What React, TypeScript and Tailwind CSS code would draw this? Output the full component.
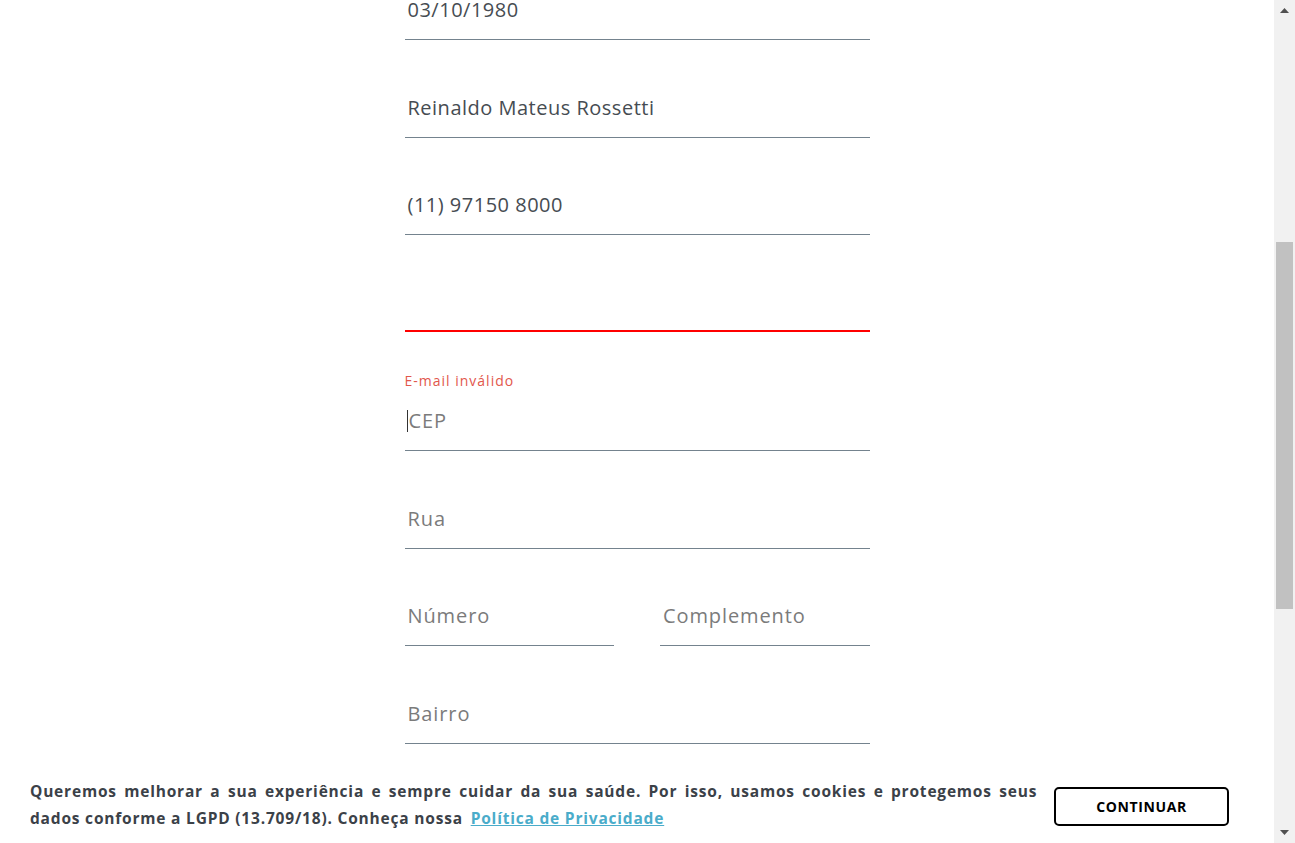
import { useState } from 'react';

const font = { fontFamily: '"Open Sans", "Liberation Sans", sans-serif' };

function Field({
  value,
  placeholder,
  error,
  caret,
}: {
  value?: string;
  placeholder: string;
  error?: boolean;
  caret?: boolean;
}) {
  return (
    <div className="flex flex-col">
      <div
        className={
          error
            ? 'flex h-[58px] items-center pl-[3px] text-[20px]'
            : 'flex h-[59px] items-center pl-[3px] text-[20px]'
        }
      >
        {caret && <span className="mr-[1px] ml-[-1px] h-[22px] w-px bg-[#333]" />}
        {value ? (
          <span className="tracking-[0.5px] text-[#464c52]">{value}</span>
        ) : (
          <span className="tracking-[0.9px] text-[#7b7b7b]">{placeholder}</span>
        )}
      </div>
      {error ? <div className="h-[2px] bg-[#ff0000]" /> : <div className="h-px bg-[#74838e]" />}
    </div>
  );
}

export default function App() {
  const [accepted, setAccepted] = useState(false);

  return (
    <div className="flex h-[843px] w-full overflow-hidden bg-white" style={font}>
      {/* Form column */}
      <div className="flex flex-1 justify-center">
        <div className="mt-[-20px] flex w-[465px] flex-col">
          <Field value="03/10/1980" placeholder="Data de nascimento" />
          <div className="mt-[38px]">
            <Field value="Reinaldo Mateus Rossetti" placeholder="Nome" />
          </div>
          <div className="mt-[37px]">
            <Field value="(11) 97150 8000" placeholder="Celular" />
          </div>
          <div className="mt-[37px]">
            <Field placeholder="" error={true} />
          </div>
          <div className="mt-[39px] h-[20px] text-[14px] leading-[20px] tracking-[1px] text-[#e2574c]">
            E-mail inválido
          </div>
          <Field placeholder="CEP" caret />
          <div className="mt-[38px]">
            <Field placeholder="Rua" />
          </div>
          <div className="mt-[37px] grid grid-cols-2 gap-[46px]">
            <Field placeholder="Número" />
            <Field placeholder="Complemento" />
          </div>
          <div className="mt-[38px]">
            <Field placeholder="Bairro" />
          </div>
        </div>
      </div>

      {/* Scrollbar */}
      <div className="flex w-[21px] flex-col items-center bg-[#f1f1f1]">
        <div className="flex h-[21px] items-center justify-center">
          <svg width="9" height="5" viewBox="0 0 9 5">
            <path d="M0 5 L4.5 0 L9 5 Z" fill="#505050" />
          </svg>
        </div>
        <div className="mt-[221px] h-[367px] w-[17px] bg-[#c1c1c1]" />
        <div className="flex-1" />
        <div className="flex h-[21px] items-center justify-center">
          <svg width="9" height="5" viewBox="0 0 9 5">
            <path d="M0 0 L9 0 L4.5 5 Z" fill="#505050" />
          </svg>
        </div>
      </div>

      {/* Cookie banner */}
      {!accepted && (
        <div className="fixed bottom-0 left-0 right-[21px] flex h-[73px] items-center bg-white pb-[4px] pl-[30px] pr-[45px]">
          <div className="w-[1008px] text-[15.5px] font-bold leading-[27px] tracking-[0.8px] text-[#3b4148]">
            <div className="text-justify [text-align-last:justify]">
              Queremos melhorar a sua experiência e sempre cuidar da sua saúde. Por isso, usamos cookies e protegemos seus
            </div>
            <div>
              dados conforme a LGPD (13.709/18). Conheça nossa{' '}
              <a href="#" className="ml-[3px] text-[#4aacca] underline">
                Política de Privacidade
              </a>
            </div>
          </div>
          <button
            onClick={() => setAccepted(true)}
            className="mb-[-4px] ml-[17px] flex h-[39px] w-[175px] items-center justify-center rounded-[5px] border-2 border-black text-[14px] font-bold tracking-[0.6px] text-black"
          >
            CONTINUAR
          </button>
        </div>
      )}
    </div>
  );
}
